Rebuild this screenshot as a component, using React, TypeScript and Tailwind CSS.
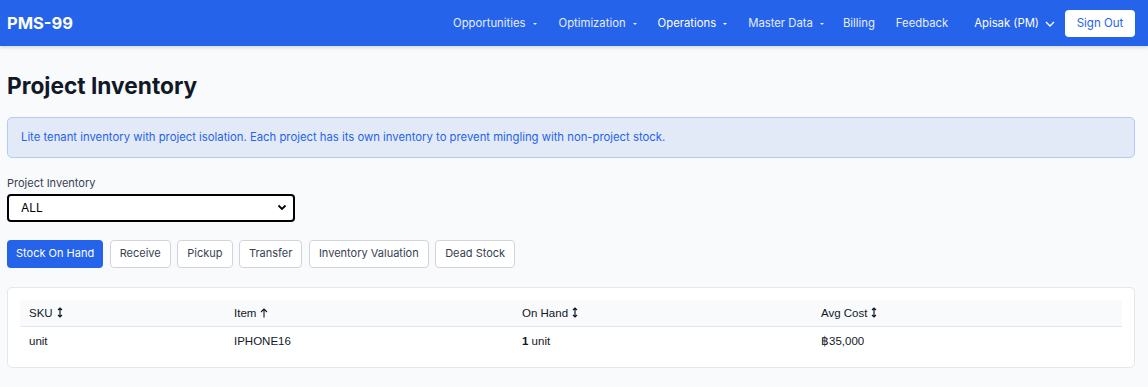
import React from "react";

const Caret = () => (
  <svg width="6" height="4" viewBox="0 0 6 4" className="ml-1.5 inline-block">
    <path d="M1 1 L3 3 L5 1 Z" fill="currentColor" />
  </svg>
);

const SortBoth = () => (
  <svg width="6" height="11" viewBox="0 0 6 11" className="ml-1 inline-block align-[-1px]">
    <path d="M3 1 V10 M1 3 L3 1 L5 3 M1 8 L3 10 L5 8" stroke="currentColor" strokeWidth="1.2" fill="none" />
  </svg>
);

const SortUp = () => (
  <svg width="8" height="10" viewBox="0 0 8 10" className="ml-1 inline-block align-[-1px]">
    <path d="M4 1 V9.5 M1 4 L4 1 L7 4" stroke="currentColor" strokeWidth="1.1" fill="none" />
  </svg>
);

const navItems = [
  { label: "Opportunities", mr: "mr-[21px]" },
  { label: "Optimization", mr: "mr-[20px]" },
  { label: "Operations", mr: "mr-[20px]" },
  { label: "Master Data", mr: "mr-[18px]" },
];
const tabs = ["Stock On Hand", "Receive", "Pickup", "Transfer", "Inventory Valuation", "Dead Stock"];

export default function App() {
  return (
    <div className="min-h-[387px] bg-[#f8fafc] font-['Inter',sans-serif]">
      {/* Navbar */}
      <nav className="flex h-[46px] items-center bg-[#2563eb] pl-[7px] pr-[13px] shadow-[0_2px_3px_rgba(0,0,0,0.12)]">
        <div className="text-[16.5px] font-bold text-white">PMS-99</div>
        <div className="ml-auto flex items-center text-[11.3px] text-[#e6edff]">
          {navItems.map((n) => (
            <span key={n.label} className={`${n.mr} flex items-center pt-[1px] ${n.label === "Operations" ? "text-white" : ""}`}>
              {n.label}
              <Caret />
            </span>
          ))}
          <span className="mr-[21px] pt-[1px]">Billing</span>
          <span className="mr-[26px] pt-[1px]">Feedback</span>
          <span className="mr-[10px] flex items-center pt-[1px] text-white">
            Apisak (PM)
            <svg width="10" height="6" viewBox="0 0 10 6" className="ml-1.5">
              <path d="M1 1 L5 5 L9 1" stroke="currentColor" strokeWidth="1.3" fill="none" />
            </svg>
          </span>
          <button className="h-[27px] w-[70px] rounded-[4px] bg-white pt-[1px] text-[11.5px] text-[#2563eb]">Sign Out</button>
        </div>
      </nav>

      <main className="px-[7px] pr-[13px]">
        <h1 className="mt-[25px] text-[22.7px] font-bold leading-[30px] text-[#111827]">Project Inventory</h1>

        <div className="mt-[16px] flex h-[41px] items-center rounded-[5px] border border-[#b4cbf6] bg-[#e3eaf7] px-[13px] text-[11.3px] text-[#2563eb]">
          Lite tenant inventory with project isolation. Each project has its own inventory to prevent mingling with non-project stock.
        </div>

        <div className="mt-[17px] text-[11px] text-[#374151]">Project Inventory</div>
        <div className="mt-[2px] flex h-[28px] w-[288px] items-center justify-between rounded-[4px] border-2 border-black bg-white pl-[12px] pr-[6px] text-[12px] text-black">
          <span>ALL</span>
          <svg width="10" height="7" viewBox="0 0 10 7">
            <path d="M1.5 1.5 L5 5 L8.5 1.5" stroke="black" strokeWidth="1.8" fill="none" />
          </svg>
        </div>

        <div className="mt-[18px] flex gap-[6.5px]">
          {tabs.map((t, i) => (
            <button
              key={t}
              className={`h-[28px] rounded-[4px] px-[9px] text-[11px] ${
                i === 0 ? "bg-[#2563eb] text-white" : "border border-[#d1d5db] bg-white text-[#374151]"
              }`}
            >
              {t}
            </button>
          ))}
        </div>

        <div className="mt-[19px] rounded-[5px] border border-[#e5e7eb] bg-white px-[12px] py-[12px] font-['Liberation_Sans',Arial,sans-serif] text-[11.5px] text-[#111827]">
          <table className="w-full border-collapse text-left">
            <thead>
              <tr className="h-[27px] border-b border-[#e2e8f0] bg-[#f8fafc]">
                <th className="w-[205px] pl-[9px] pt-[2px] font-normal">SKU<SortBoth /></th>
                <th className="w-[288px] pl-[9px] pt-[2px] font-normal">Item<SortUp /></th>
                <th className="w-[299px] pl-[9px] pt-[2px] font-normal">On Hand<SortBoth /></th>
                <th className="pl-[9px] pt-[2px] font-normal">Avg Cost<SortBoth /></th>
              </tr>
            </thead>
            <tbody>
              <tr className="h-[28px]">
                <td className="pl-[9px] pt-[2px]">unit</td>
                <td className="pl-[9px] pt-[2px]">IPHONE16</td>
                <td className="pl-[9px] pt-[2px]"><b>1</b> unit</td>
                <td className="pl-[9px] pt-[2px]">฿35,000</td>
              </tr>
            </tbody>
          </table>
        </div>
      </main>
    </div>
  );
}
